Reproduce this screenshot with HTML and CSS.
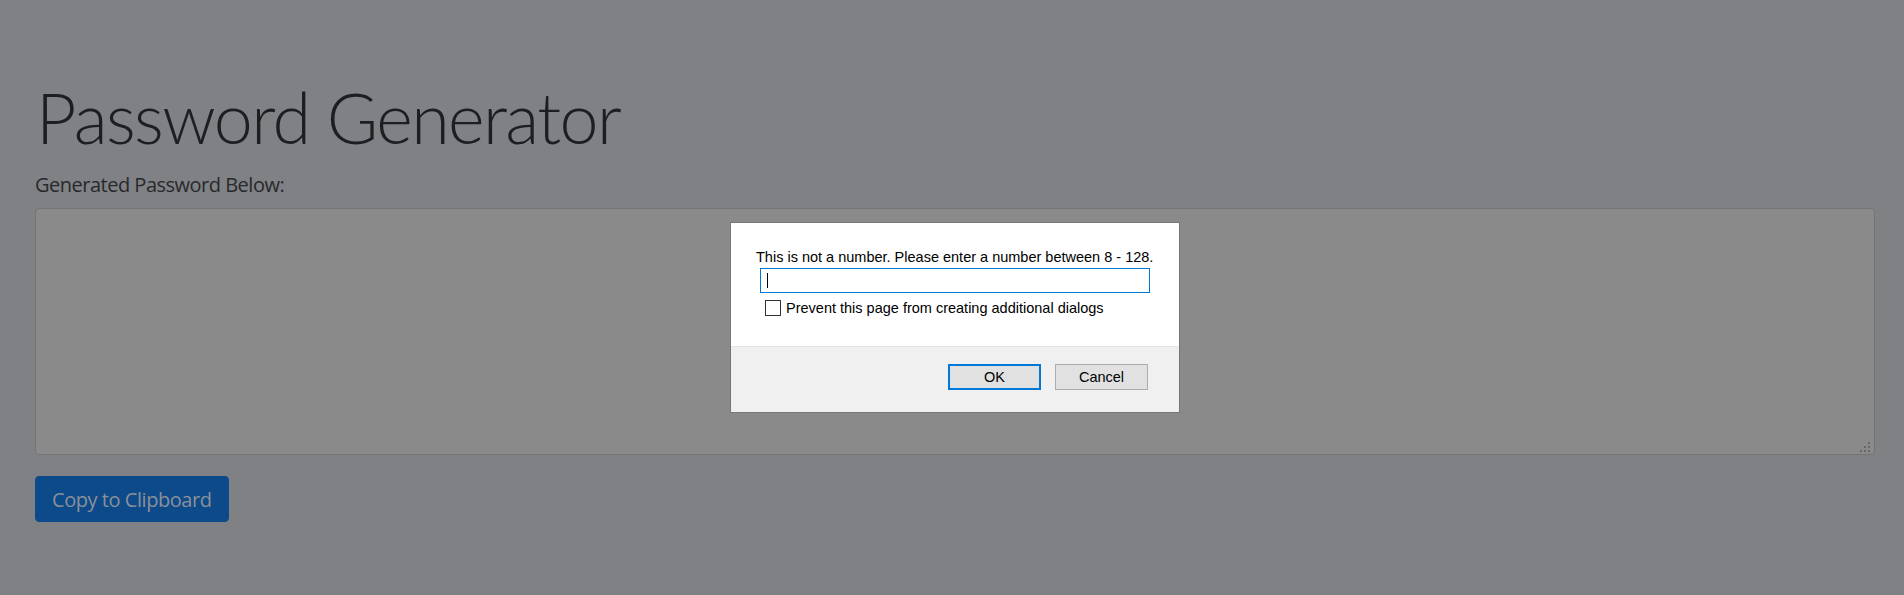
FILE: index.html
```html
<!DOCTYPE html>
<html lang="en">
<head>
<meta charset="utf-8">
<title>Password Generator</title>
<link rel="stylesheet" href="styles.css">
</head>
<body>
<main class="page">
  <h1 class="title">Password Generator</h1>
  <label class="label" for="password">Generated Password Below:</label>
  <div class="area-wrap">
    <textarea id="password" class="area" readonly></textarea>
    <span class="grip">
      <i class="dot d1"></i>
      <i class="dot d2"></i><i class="dot d3"></i>
      <i class="dot d4"></i><i class="dot d5"></i><i class="dot d6"></i>
    </span>
  </div>
  <button class="copy" type="button">Copy to Clipboard</button>
</main>

<div class="dialog" role="dialog">
  <div class="dialog-body">
    <div class="msg">This is not a number. Please enter a number between 8 - 128.</div>
    <div class="prompt-input"><span class="caret"></span></div>
    <div class="check-row">
      <span class="checkbox"></span>
      <span class="check-label">Prevent this page from creating additional dialogs</span>
    </div>
  </div>
  <div class="dialog-footer">
    <button class="dbtn ok" type="button">OK</button>
    <button class="dbtn cancel" type="button">Cancel</button>
  </div>
</div>
</body>
</html>
```

FILE: styles.css
```css
html, body {
  margin: 0;
  padding: 0;
}
body {
  background: #808184;
  font-family: "Open Sans", "Liberation Sans", sans-serif;
  color: #25272a;
  height: 595px;
  overflow: hidden;
}
.page {
  padding: 0 29px 0 35px;
  display: flex;
  flex-direction: column;
  align-items: flex-start;
}
.title {
  margin: 75px 0 0 1px;
  font-family: Lato, "Open Sans", sans-serif;
  font-size: 70px;
  font-weight: 300;
  line-height: 85px;
  letter-spacing: -1.6px;
  color: #1d1e21;
}
.label {
  margin-top: 10px;
  font-size: 20px;
  line-height: 30px;
  color: #27292c;
  letter-spacing: -0.5px;
}
.area-wrap {
  position: relative;
  align-self: stretch;
  margin-top: 8px;
}
.area {
  display: block;
  box-sizing: border-box;
  width: 100%;
  height: 247px;
  margin: 0;
  background: #8a8a8a;
  border: 1px solid #737476;
  border-radius: 4px;
  resize: none;
  outline: none;
}
.grip {
  position: absolute;
  right: 5px;
  bottom: 3px;
  width: 10px;
  height: 10px;
}
.dot {
  position: absolute;
  width: 2px;
  height: 2px;
  background: #666769;
}
.d1 { left: 8px; top: 0; }
.d2 { left: 4px; top: 4px; }
.d3 { left: 8px; top: 4px; }
.d4 { left: 0; top: 8px; }
.d5 { left: 4px; top: 8px; }
.d6 { left: 8px; top: 8px; }
.copy {
  margin-top: 21px;
  box-sizing: border-box;
  height: 46px;
  padding: 0 16px;
  font-family: inherit;
  font-size: 20px;
  background: #0d4a8a;
  color: #8a9098;
  border: 1px solid #0d4a8a;
  border-radius: 4px;
  letter-spacing: -0.45px;
}

/* dialog */
.dialog {
  position: absolute;
  left: 730px;
  top: 222px;
  width: 450px;
  height: 191px;
  box-sizing: border-box;
  border: 1px solid #767676;
  background: #ffffff;
  display: flex;
  flex-direction: column;
  font-family: "Liberation Sans", Arial, sans-serif;
  font-size: 14.5px;
  color: #000;
}
.dialog-body {
  flex: 1;
  padding: 26px 0 0 25px;
}
.msg {
  line-height: 17px;
  white-space: nowrap;
}
.prompt-input {
  box-sizing: border-box;
  width: 390px;
  height: 25px;
  margin: 2px 0 0 4px;
  border: 1px solid #0078d7;
  display: flex;
  align-items: center;
}
.caret {
  width: 1px;
  height: 15px;
  margin-left: 6px;
  background: #000;
}
.check-row {
  display: flex;
  align-items: center;
  margin: 7px 0 0 9px;
  height: 16px;
}
.checkbox {
  box-sizing: border-box;
  width: 16px;
  height: 16px;
  border: 1px solid #333;
  background: #fff;
}
.check-label {
  margin-left: 5px;
  line-height: 17px;
}
.dialog-footer {
  height: 66px;
  box-sizing: border-box;
  background: #f0f0f0;
  border-top: 1px solid #e3e3e3;
  display: flex;
  justify-content: flex-end;
  align-items: flex-start;
  gap: 14px;
  padding: 17px 31px 0 0;
}
.dbtn {
  box-sizing: border-box;
  width: 93px;
  height: 26px;
  margin: 0;
  padding: 0;
  font-family: inherit;
  font-size: 14.5px;
  color: #000;
  background: #e1e1e1;
  border-radius: 0;
}
.ok {
  border: 2px solid #0078d7;
}
.cancel {
  border: 1px solid #adadad;
}
```
